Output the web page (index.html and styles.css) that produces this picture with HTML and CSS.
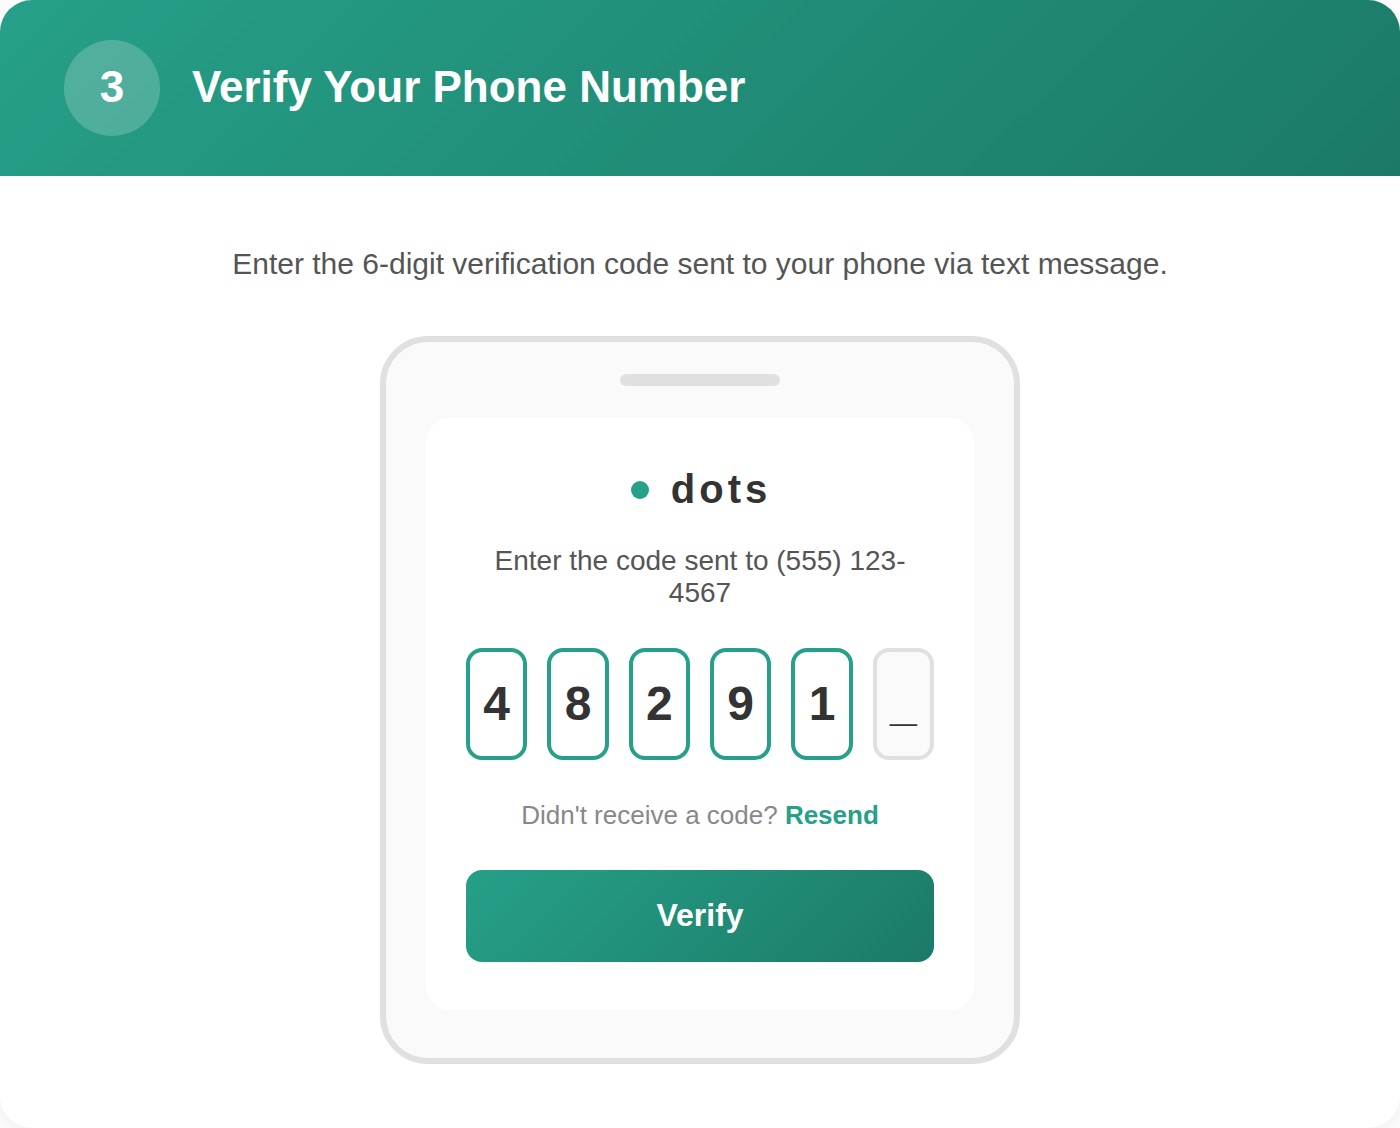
FILE: index.html
```html
<!DOCTYPE html>
<html lang="en">
<head>
<meta charset="utf-8">
<meta name="viewport" content="width=device-width, initial-scale=1">
<title>Verify Your Phone Number</title>
<link rel="stylesheet" href="styles.css">
</head>
<body>
<main class="card">
  <header class="card-header">
    <span class="step">3</span>
    <h1 class="title">Verify Your Phone Number</h1>
  </header>
  <div class="card-body">
    <p class="intro">Enter the 6-digit verification code sent to your phone via text message.</p>
    <section class="phone">
      <div class="speaker"></div>
      <form class="screen">
        <div class="brand"><span class="brand-dot"></span>dots</div>
        <p class="sent">Enter the code sent to (555) 123-4567</p>
        <div class="code">
          <input class="digit" type="text" value="4" maxlength="1" aria-label="Digit 1">
          <input class="digit" type="text" value="8" maxlength="1" aria-label="Digit 2">
          <input class="digit" type="text" value="2" maxlength="1" aria-label="Digit 3">
          <input class="digit" type="text" value="9" maxlength="1" aria-label="Digit 4">
          <input class="digit" type="text" value="1" maxlength="1" aria-label="Digit 5">
          <input class="digit digit-empty" type="text" value="_" maxlength="1" aria-label="Digit 6">
        </div>
        <p class="resend">Didn't receive a code? <a class="resend-link" href="#">Resend</a></p>
        <button class="verify" type="button">Verify</button>
      </form>
    </section>
  </div>
</main>
</body>
</html>
```
FILE: styles.css
```css
* {
  box-sizing: border-box;
}

body {
  margin: 0;
  background: #fff;
  color: #333;
  font-family: "Liberation Sans", Arial, sans-serif;
}

h1,
p {
  margin: 0;
}

.card {
  background: #fff;
  border-radius: 32px;
  box-shadow: 0 8px 40px rgba(0, 0, 0, 0.08);
  overflow: hidden;
}

.card-header {
  display: flex;
  align-items: center;
  gap: 32px;
  padding: 40px 64px;
  background: linear-gradient(135deg, #26a088, #1b7a67);
  color: #fff;
}

.step {
  display: flex;
  align-items: center;
  justify-content: center;
  width: 96px;
  height: 96px;
  padding-bottom: 2px;
  border-radius: 50%;
  background: rgba(255, 255, 255, 0.2);
  font-size: 44px;
  font-weight: 700;
}

.title {
  padding-bottom: 2px;
  font-size: 44px;
  line-height: 52px;
}

.card-body {
  padding: 64px;
}

.intro {
  margin-bottom: 48px;
  color: #555;
  font-size: 30px;
  line-height: 48px;
  text-align: center;
}

.phone {
  max-width: 640px;
  margin: 0 auto;
  padding: 32px 40px 48px;
  border: 6px solid #e0e0e0;
  border-radius: 48px;
  background: #fafafa;
}

.speaker {
  width: 160px;
  height: 12px;
  margin: 0 auto 32px;
  border-radius: 6px;
  background: #e0e0e0;
}

.screen {
  padding: 48px 40px;
  border-radius: 24px;
  background: #fff;
  text-align: center;
}

.brand {
  display: flex;
  align-items: center;
  justify-content: center;
  gap: 22px;
  margin-bottom: 32px;
  padding-left: 2px;
  font-size: 40px;
  font-weight: 700;
  letter-spacing: 4px;
  line-height: 47px;
}

.brand-dot {
  width: 18px;
  height: 18px;
  border-radius: 50%;
  background: #26a088;
}

.sent {
  margin-bottom: 39px;
  color: #555;
  font-size: 28px;
  line-height: 32px;
}

.code {
  display: grid;
  grid-template-columns: repeat(6, 1fr);
  gap: 20px;
  margin-bottom: 40px;
}

.digit {
  width: 100%;
  min-width: 0;
  height: 112px;
  padding: 0 0 2px;
  border: 4px solid #26a088;
  border-radius: 16px;
  background: #fff;
  color: #333;
  font: 700 48px "Liberation Sans", Arial, sans-serif;
  text-align: center;
}

.digit-empty {
  border-color: #e0e0e0;
  background: #fafafa;
}

.resend {
  margin-bottom: 40px;
  color: #888;
  font-size: 26px;
  line-height: 30px;
}

.resend-link {
  color: #26a088;
  font-weight: 700;
  text-decoration: none;
}

.verify {
  display: block;
  width: 100%;
  padding: 27px 28px 29px;
  border: 0;
  border-radius: 16px;
  background: linear-gradient(135deg, #26a088, #1b7a67);
  color: #fff;
  font: 700 32px/36px "Liberation Sans", Arial, sans-serif;
}
```
